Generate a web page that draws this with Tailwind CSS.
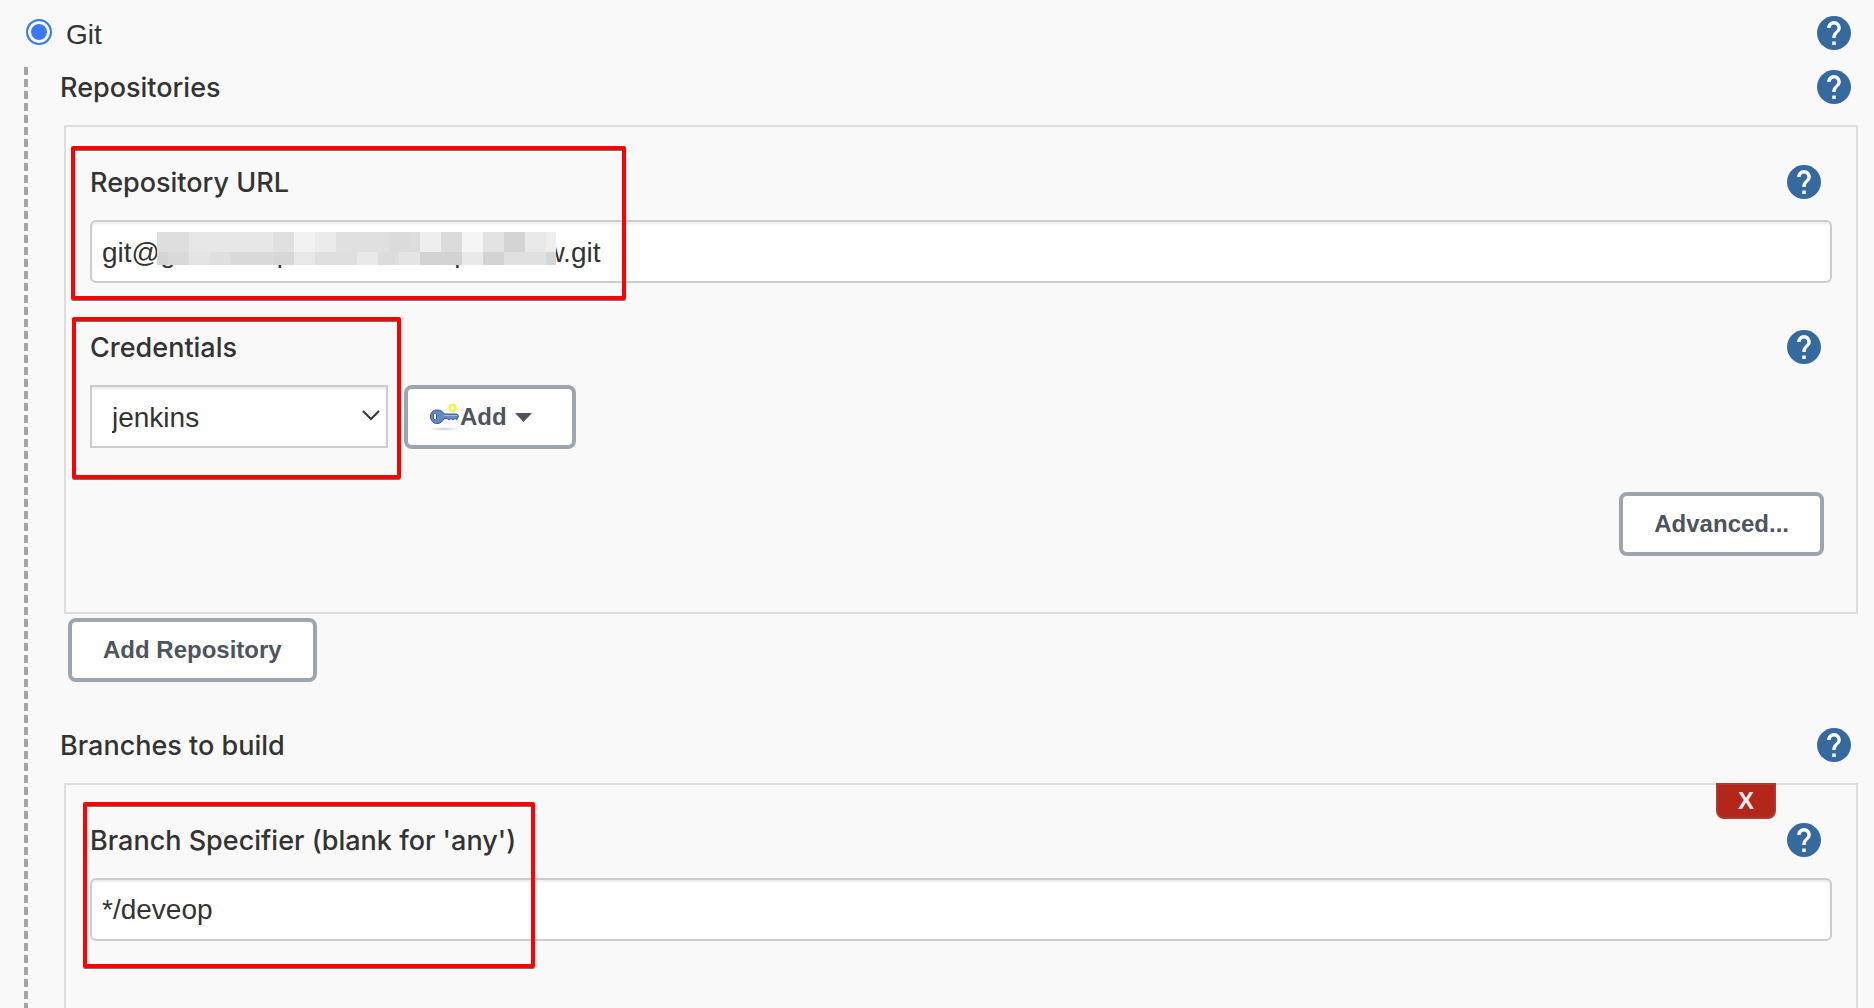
<!DOCTYPE html>
<html lang="en">
<head>
    <meta charset="UTF-8">
    <meta name="viewport" content="width=device-width, initial-scale=1.0">
    <title>Source Code Management</title>
    <script src="https://cdn.jsdelivr.net/npm/@tailwindcss/browser@4"></script>
</head>
<body class="bg-[#f9f9f9] font-['Liberation_Sans',Arial,sans-serif] text-[28px] text-[#333] overflow-hidden">

    <!-- Help icon shared by every row -->
    <svg class="hidden">
        <symbol id="help" viewBox="2 2 20 20">
            <path fill="#366a9f" d="M12 2C6.48 2 2 6.48 2 12s4.480 10 10 10 10-4.480 10-10S17.520 2 12 2z"/>
            <path fill="#fff" d="M13 19h-2v-2h2v2zm2.070-7.750l-.9.920C13.450 12.900 13 13.500 13 15h-2v-.5c0-1.100.450-2.100 1.170-2.830l1.240-1.260c.370-.360.590-.860.590-1.410 0-1.100-.9-2-2-2s-2 .9-2 2H8c0-2.210 1.790-4 4-4s4 1.790 4 4c0 .880-.360 1.680-.930 2.250z"/>
        </symbol>
    </svg>

    <!-- SCM choice -->
    <div class="flex h-[67px] items-start justify-between pt-4 pr-[23px] pl-[26px]">
        <div class="flex h-[34px] items-start gap-3.5">
            <input id="scm-git" type="radio" name="scm" checked class="mt-[3px] size-[26px] appearance-none rounded-full border-2 border-[#3b78f6] bg-[#3b78f6] shadow-[inset_0_0_0_3px_#fff]">
            <label for="scm-git" class="leading-[38px]">Git</label>
        </div>
        <button type="button" aria-label="Help: Git"><svg class="size-[34px]"><use href="#help"/></svg></button>
    </div>

    <div class="ml-6 flex">
        <div class="w-1 shrink-0 bg-[repeating-linear-gradient(to_bottom,#a5a5a5_0_8px,transparent_8px_12px)]"></div>

        <div class="min-w-0 flex-1 pt-[3px] pl-8">
            <!-- Repositories -->
            <div class="flex h-[34px] items-start justify-between pr-[23px]">
                <h2 class="font-['Inter',sans-serif] text-[27px] leading-9 font-medium">Repositories</h2>
                <button type="button" aria-label="Help: Repositories"><svg class="size-[34px]"><use href="#help"/></svg></button>
            </div>

            <div class="relative mt-[21px] mr-4 ml-1 border-2 border-[#ddd] px-6 pt-[38px] pb-14">
                <div class="flex h-[34px] items-start justify-between pr-[11px]">
                    <label for="repo-url" class="font-['Inter',sans-serif] text-[27px] leading-9 font-medium">Repository URL</label>
                    <button type="button" aria-label="Help: Repository URL"><svg class="size-[34px]"><use href="#help"/></svg></button>
                </div>
                <div class="relative mt-[21px]">
                    <input id="repo-url" type="text" value="git@gexxxxxepxxxxxxeeeeepxxeeew.git" class="block h-[63px] w-full rounded-md border-2 border-[#ccc] bg-white px-2.5 pt-0.5 shadow-[inset_0_2px_2px_rgba(0,0,0,0.075)]">
                    <!-- Pixelated part of the address -->
                    <svg class="absolute top-3 left-[67px] h-[33px] w-[399px]" viewBox="0 0 399 33" shape-rendering="crispEdges">
                        <path fill="#dedede" d="M0 0h32v20H0z"/>
                        <path fill="#e7e7e7" d="M32 0h84v20H32z"/>
                        <path fill="#e1e1e1" d="M116 0h21v20h-21z"/>
                        <path fill="#f2f2f2" d="M137 0h21v20h-21z"/>
                        <path fill="#ebebeb" d="M158 0h21v20h-21z"/>
                        <path fill="#e0e0e0" d="M179 0h42v20h-42z"/>
                        <path fill="#dddddd" d="M221 0h42v20h-42z"/>
                        <path fill="#e0e0e0" d="M221 0h11v20h-11z"/>
                        <path fill="#dbdbdb" d="M232 0h21v20h-21z"/>
                        <path fill="#eeeeee" d="M263 0h21v20h-21z"/>
                        <path fill="#dbdbdb" d="M284 0h21v20h-21z"/>
                        <path fill="#f5f5f5" d="M305 0h21v20h-21z"/>
                        <path fill="#e3e3e3" d="M326 0h21v20h-21z"/>
                        <path fill="#d4d4d4" d="M347 0h21v20h-21z"/>
                        <path fill="#e8e8e8" d="M368 0h21v20h-21z"/>
                        <path fill="#eeeeee" d="M389 0h10v20h-10z"/>
                        <path fill="#d4d4d4" d="M0 20h11v13H0z"/>
                        <path fill="#d9d9d9" d="M11 20h21v13H11z"/>
                        <path fill="#e4e4e4" d="M32 20h21v13H32z"/>
                        <path fill="#dfdfdf" d="M53 20h21v13H53z"/>
                        <path fill="#dadada" d="M74 20h42v13H74z"/>
                        <path fill="#d7d7d7" d="M116 20h21v13h-21z"/>
                        <path fill="#e8e8e8" d="M137 20h21v13h-21z"/>
                        <path fill="#dfdfdf" d="M158 20h42v13h-42z"/>
                        <path fill="#e9e9e9" d="M200 20h21v13h-21z"/>
                        <path fill="#dcdcdc" d="M221 20h21v13h-21z"/>
                        <path fill="#e5e5e5" d="M242 20h21v13h-21z"/>
                        <path fill="#d3d3d3" d="M263 20h42v13h-42z"/>
                        <path fill="#e9e9e9" d="M305 20h21v13h-21z"/>
                        <path fill="#d3d3d3" d="M326 20h21v13h-21z"/>
                        <path fill="#e1e1e1" d="M347 20h42v13h-42z"/>
                        <path fill="#d6d6d6" d="M389 20h10v13h-10z"/>
                    </svg>
                </div>

                <!-- Credentials -->
                <div class="mt-[47px] flex h-[34px] items-start justify-between pr-[11px]">
                    <label for="credentials" class="font-['Inter',sans-serif] text-[27px] leading-9 font-medium">Credentials</label>
                    <button type="button" aria-label="Help: Credentials"><svg class="size-[34px]"><use href="#help"/></svg></button>
                </div>
                <div class="mt-[21px] flex items-start gap-4">
                    <div class="relative">
                        <select id="credentials" class="block h-[63px] w-[298px] appearance-none border-2 border-[#ccc] bg-white pt-0.5 pl-5 shadow-[inset_0_2px_2px_rgba(0,0,0,0.075)]">
                            <option>jenkins</option>
                        </select>
                        <svg class="pointer-events-none absolute top-6 right-2 h-3 w-[18px]" viewBox="0 0 18 12" fill="none" stroke="#333" stroke-width="2">
                            <path d="M1 2l8 8 8-8"/>
                        </svg>
                    </div>
                    <button type="button" class="flex h-16 w-[172px] items-center rounded-lg border-4 border-[#9da6ae] bg-white pl-[22px] text-[24px] font-bold text-[#4d545d]">
                        <svg class="h-8 w-[30px]" viewBox="0 0 30 32">
                            <defs>
                                <radialGradient id="key-shadow"><stop offset="0" stop-color="#ccc"/><stop offset="1" stop-color="#fff"/></radialGradient>
                            </defs>
                            <ellipse cx="14" cy="28" rx="15" ry="2" fill="url(#key-shadow)"/>
                            <circle cx="22.500" cy="7" r="5" fill="#fdf8a0"/>
                            <circle cx="22.500" cy="7" r="3" fill="#fffbd0" stroke="#f9ee58" stroke-width="2"/>
                            <path fill="#6489c4" stroke="#34558f" d="M7 9c3.500 0 6 1.500 7 4h13l1.500 2-1.500 3.500-2-1-2 1.500-2-1.500-2 1.500-2-1.500h-3c-1.500 3-3.500 5-7 5-4 0-6.500-3-6.500-7S3 9 7 9z"/>
                            <path stroke="#9db8e0" d="M14 14.500h13"/>
                            <path fill="#fff" stroke="#34558f" d="M3.500 13c1-1 2-1 3 0v5c-1 1-2 1-3 0z"/>
                        </svg>
                        Add
                        <svg class="ml-2 h-[9px] w-[17px]" viewBox="0 0 17 9"><path fill="#4d545d" d="M0 0h17L8.500 9z"/></svg>
                    </button>
                </div>

                <div class="mt-[43px] flex justify-end pr-2">
                    <button type="button" class="h-16 rounded-lg border-4 border-[#9da6ae] bg-white px-[31px] text-[24px] font-bold text-[#4d545d]">Advanced...</button>
                </div>

                <!-- Highlight frames -->
                <div class="pointer-events-none absolute top-[19px] left-[5px] h-[154px] w-[555px] rounded-xs border-4 border-[#f00] shadow-[0_1px_0_#777,inset_0_1px_0_#777]"></div>
                <div class="pointer-events-none absolute top-[190px] left-[6px] h-[162px] w-[329px] rounded-xs border-4 border-[#f00] shadow-[0_1px_0_#777,inset_0_1px_0_#777]"></div>
            </div>

            <button type="button" class="mt-1 ml-2 block h-16 rounded-lg border-4 border-[#9da6ae] bg-white px-[31px] text-[24px] font-bold text-[#4d545d]">Add Repository</button>

            <!-- Branches -->
            <div class="mt-[46px] flex h-[34px] items-start justify-between pr-[23px]">
                <h2 class="font-['Inter',sans-serif] text-[27px] leading-9 font-medium">Branches to build</h2>
                <button type="button" aria-label="Help: Branches to build"><svg class="size-[34px]"><use href="#help"/></svg></button>
            </div>

            <div class="relative mt-[21px] mr-4 ml-1 border-2 border-[#ddd] px-6 pt-[38px] pb-24">
                <button type="button" aria-label="Delete branch" class="absolute -top-0.5 right-20 h-9 w-[60px] rounded-b-lg border-2 border-[#b03a30] bg-[#b3261a] text-[24px] leading-none font-bold text-[#eee]">X</button>
                <div class="flex h-[34px] items-start justify-between pr-[11px]">
                    <label for="branch" class="font-['Inter',sans-serif] text-[27px] leading-9 font-medium">Branch Specifier (blank for 'any')</label>
                    <button type="button" aria-label="Help: Branch Specifier"><svg class="size-[34px]"><use href="#help"/></svg></button>
                </div>
                <input id="branch" type="text" value="*/deveop" class="mt-[21px] block h-[63px] w-full rounded-md border-2 border-[#ccc] bg-white px-2.5 shadow-[inset_0_2px_2px_rgba(0,0,0,0.075)]">
                <div class="pointer-events-none absolute top-[17px] left-[17px] h-[166px] w-[452px] rounded-xs border-4 border-[#f00] shadow-[0_1px_0_#777,inset_0_1px_0_#777]"></div>
            </div>
        </div>
    </div>

</body>
</html>
